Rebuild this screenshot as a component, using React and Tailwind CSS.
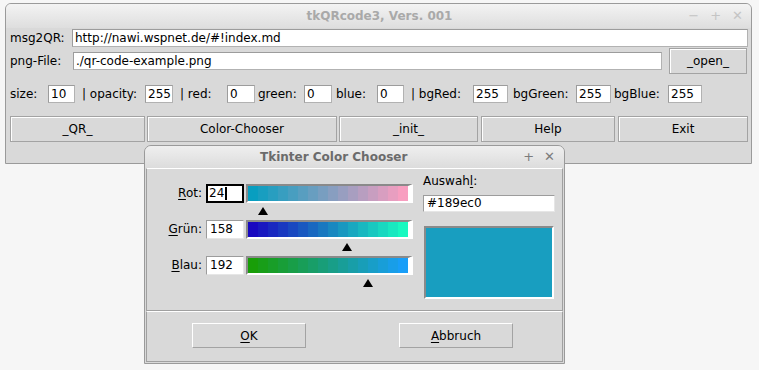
import React from 'react';

const STEPS = Array.from({ length: 16 }, (_, i) => Math.round(((i + 0.5) * 256) / 16));

const channels = [
  { key: 'R', rest: 'ot:', value: 24, color: (t) => `rgb(${t},158,192)` },
  { key: 'G', rest: 'rün:', value: 158, color: (t) => `rgb(24,${t},192)` },
  { key: 'B', rest: 'lau:', value: 192, color: (t) => `rgb(24,158,${t})` },
];

const Entry = ({ value, w }) => (
  <div
    className={`${w} h-[18px] bg-white border border-[#b2b2b2] border-t-[#9c9c9c] border-l-[#9c9c9c] pl-[2px] text-[12px] leading-[16px] text-black whitespace-nowrap overflow-hidden`}
  >
    {value}
  </div>
);

const Label = ({ text, w, pl }) => (
  <span className={`${w} ${pl} text-[12px] leading-[18px] text-black whitespace-nowrap`}>{text}</span>
);

const TkButton = ({ children, w }) => (
  <div
    className={`${w} h-full flex items-center justify-center bg-[#d9d9d9] border border-[#a3a3a3] shadow-[inset_1px_1px_0_#ffffff] text-[12px] text-black`}
  >
    {children}
  </div>
);

const Slider = ({ value, color }) => {
  const center = 2 + (value / 255) * 160;
  return (
    <div className="flex flex-col">
      <div className="flex h-[19px] w-[167px] border-t-2 border-l-2 border-[#8a8a8a] border-r-[5px] border-b-2 border-r-white border-b-white">
        {STEPS.map((t) => (
          <div key={t} className="flex-1 h-full" style={{ background: color(t) }} />
        ))}
      </div>
      <div className="relative h-[17px]">
        <svg className="absolute top-[4px]" style={{ left: center - 5 }} width="10" height="8" viewBox="0 0 10 8">
          <polygon points="5,0 10,8 0,8" fill="#000" />
        </svg>
      </div>
    </div>
  );
};

export default function App() {
  return (
    <div className="relative w-[759px] h-[370px] bg-[#f6f6f6] overflow-hidden font-['DejaVu_Sans',sans-serif]">
      {/* main window */}
      <div className="absolute left-[5px] top-[3px] w-[747px] h-[161px] bg-[#d9d9d9] border border-[#9a9a9a] rounded-t-[6px] overflow-hidden">
        <div className="relative h-[24px] bg-gradient-to-b from-[#f3f3f3] to-[#dedede] flex items-center justify-center">
          <span className="text-[12px] font-bold text-[#a9a9a9] pl-[2px]">tkQRcode3, Vers. 001</span>
          <div className="absolute right-[8px] top-0 h-full flex items-center gap-[11px] text-[#c4c4c4] text-[13px]">
            <span>−</span>
            <span>+</span>
            <span>✕</span>
          </div>
        </div>

        <div className="flex items-center h-[19px]">
          <Label text="msg2QR:" w="w-[66px]" pl="pl-[4px]" />
          <Entry value="http://nawi.wspnet.de/#!index.md" w="w-[676px]" />
        </div>

        <div className="flex items-center h-[28px]">
          <Label text="png-File:" w="w-[67px]" pl="pl-[4px]" />
          <Entry value="./qr-code-example.png" w="w-[589px]" />
          <div className="ml-[7px] h-[26px]">
            <TkButton w="w-[78px]">_open_</TkButton>
          </div>
        </div>

        <div className="flex items-center h-[18px] mt-[10px]">
          <Label text="size:" w="w-[42px]" pl="pl-[4px]" />
          <Entry value="10" w="w-[27px]" />
          <Label text="| opacity:" w="w-[70px]" pl="pl-[7px]" />
          <Entry value="255" w="w-[28px]" />
          <Label text="| red:" w="w-[54px]" pl="pl-[7px]" />
          <Entry value="0" w="w-[28px]" />
          <Label text="green:" w="w-[49px]" pl="pl-[3px]" />
          <Entry value="0" w="w-[28px]" />
          <Label text="blue:" w="w-[45px]" pl="pl-[4px]" />
          <Entry value="0" w="w-[27px]" />
          <Label text="| bgRed:" w="w-[69px]" pl="pl-[7px]" />
          <Entry value="255" w="w-[35px]" />
          <Label text="bgGreen:" w="w-[68px]" pl="pl-[5px]" />
          <Entry value="255" w="w-[35px]" />
          <Label text="bgBlue:" w="w-[57px]" pl="pl-[3px]" />
          <Entry value="255" w="w-[34px]" />
        </div>

        <div className="flex h-[26px] mt-[13px] pl-[4px]">
          <TkButton w="w-[135px]">_QR_</TkButton>
          <div className="w-[2px]" />
          <TkButton w="w-[190px]">Color-Chooser</TkButton>
          <div className="w-[2px]" />
          <TkButton w="w-[139px]">_init_</TkButton>
          <div className="w-[3px]" />
          <TkButton w="w-[134px]">Help</TkButton>
          <div className="w-[3px]" />
          <TkButton w="w-[130px]">Exit</TkButton>
        </div>
      </div>

      {/* color chooser window */}
      <div className="absolute left-[144px] top-[145px] w-[421px] h-[219px] bg-[#d9d9d9] border border-[#9a9a9a] rounded-t-[7px] overflow-hidden flex flex-col">
        <div className="relative h-[22px] bg-gradient-to-b from-[#efefef] to-[#dcdcdc] flex items-center">
          <span className="pl-[115px] text-[12px] font-bold text-[#6b6b6b]">Tkinter Color Chooser</span>
          <div className="absolute right-[9px] top-0 h-full flex items-center gap-[10px] text-[#7c7c7c] text-[13px]">
            <span>+</span>
            <span>✕</span>
          </div>
        </div>

        <div className="flex flex-col px-[1px] pb-[1px] flex-1">
          <div className="h-[143px] flex border-t border-t-white border-l border-[#a0a0a0] border-r border-b">
            <div className="flex flex-col pt-[15px]">
              {channels.map((c) => (
                <div key={c.key} className="flex items-start">
                  <span className="w-[59px] h-[19px] pr-[4px] text-right text-[12px] leading-[19px] text-black">
                    <span className="underline underline-offset-2">{c.key}</span>
                    {c.rest}
                  </span>
                  {c.key === 'R' ? (
                    <div className="w-[38px] h-[19px] bg-white border-2 border-black pl-[1px] text-[12px] leading-[15px] text-black flex items-center">
                      24<span className="inline-block w-[2px] h-[13px] bg-black ml-[1px]" />
                    </div>
                  ) : (
                    <div className="w-[38px] h-[19px] bg-white border border-[#e6e6e6] border-t-[#9c9c9c] border-l-[#9c9c9c] pl-[3px] text-[12px] leading-[17px] text-black">
                      {c.value}
                    </div>
                  )}
                  <div className="ml-[2px]">
                    <Slider value={c.value} color={c.color} />
                  </div>
                </div>
              ))}
            </div>

            <div className="flex flex-col pt-[4px] ml-[10px]">
              <span className="h-[16px] text-[12px] leading-[16px] text-black">
                Auswah<span className="underline underline-offset-2">l</span>:
              </span>
              <div className="mt-[6px] w-[132px] h-[17px] bg-white border border-[#e6e6e6] border-t-[#9c9c9c] border-l-[#9c9c9c] pl-[3px] text-[12px] leading-[15px] text-black">
                #189ec0
              </div>
              <div className="mt-[14px] ml-[1px] w-[130px] h-[73px] bg-[#189ec0] border-t-2 border-l-2 border-[#8a8a8a] border-b-2 border-r-2 border-b-white border-r-white" />
            </div>
          </div>

          <div className="flex-1 flex items-start pt-[11px] pl-[45px] border-t border-t-white border-l border-[#a0a0a0] border-r border-b">
            <div className="h-[25px]">
              <div className="w-[114px] h-full flex items-center justify-center bg-[#d9d9d9] border border-[#a3a3a3] border-t-white border-l-white text-[12px] text-black">
                <span className="underline underline-offset-2">O</span>K
              </div>
            </div>
            <div className="h-[25px] ml-[93px]">
              <div className="w-[114px] h-full flex items-center justify-center bg-[#d9d9d9] border border-[#a3a3a3] border-t-white border-l-white text-[12px] text-black">
                <span className="underline underline-offset-2">A</span>bbruch
              </div>
            </div>
          </div>
        </div>
      </div>
    </div>
  );
}
